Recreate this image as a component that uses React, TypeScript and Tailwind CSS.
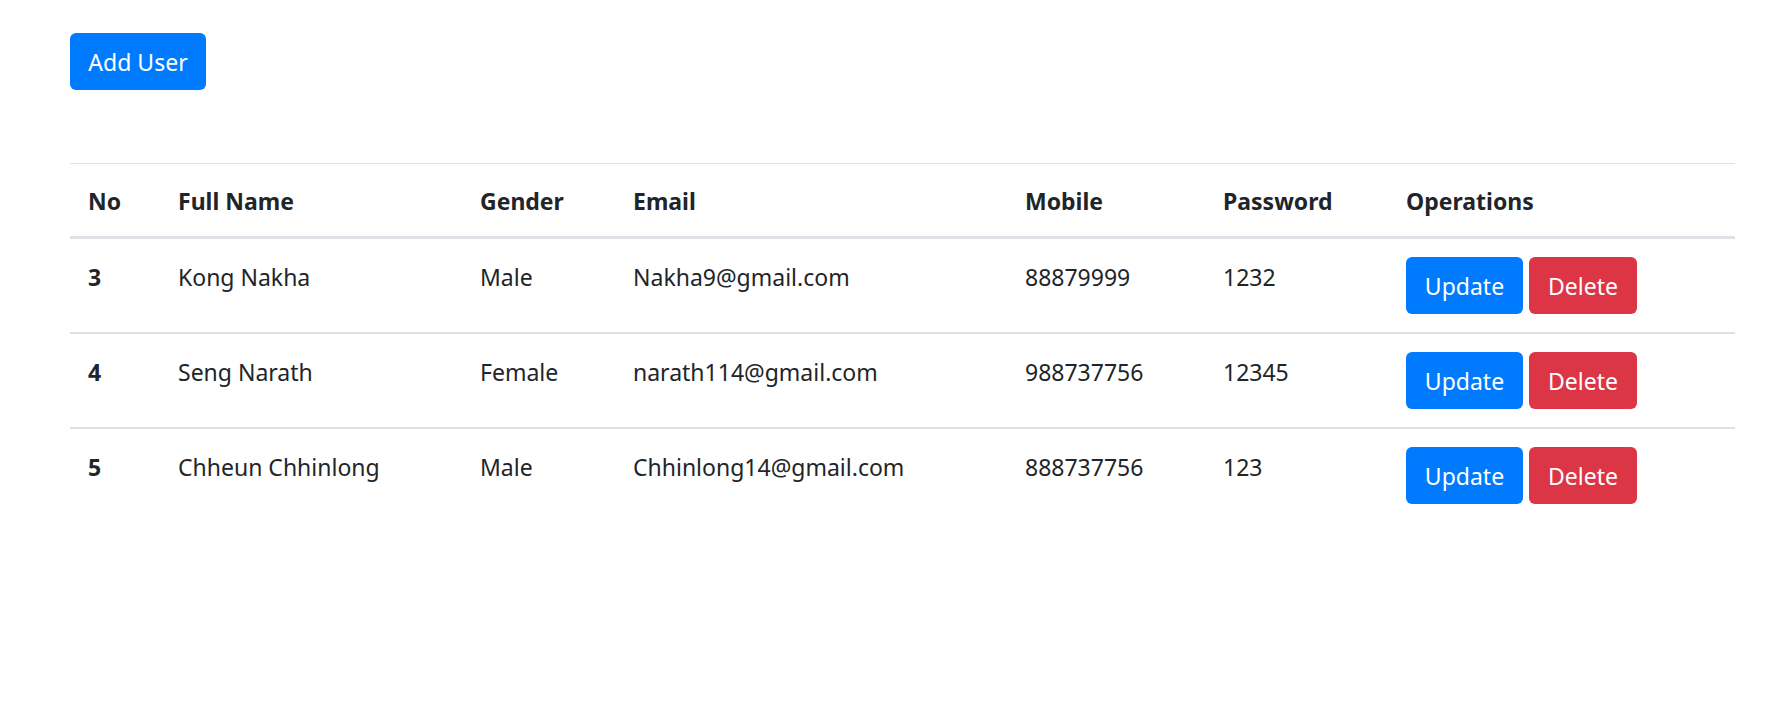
import React from 'react';

const users = [
  { no: 3, name: 'Kong Nakha', gender: 'Male', email: 'Nakha9@gmail.com', mobile: '88879999', password: '1232' },
  { no: 4, name: 'Seng Narath', gender: 'Female', email: 'narath114@gmail.com', mobile: '988737756', password: '12345' },
  { no: 5, name: 'Chheun Chhinlong', gender: 'Male', email: 'Chhinlong14@gmail.com', mobile: '888737756', password: '123' },
];

export default function App() {
  return (
    <div className="min-h-screen bg-white pl-[70px] pr-[47px] pt-[33px] font-['Noto_Sans',sans-serif] text-[23px] leading-[36px] text-[#212529]">
      <button className="h-[57px] w-[136px] rounded-[6px] bg-[#007bff] text-white">Add User</button>

      <table className="mt-[73px] w-full table-fixed border-collapse">
        <colgroup>
          <col className="w-[90px]" />
          <col className="w-[302px]" />
          <col className="w-[153px]" />
          <col className="w-[392px]" />
          <col className="w-[198px]" />
          <col className="w-[183px]" />
          <col />
        </colgroup>
        <thead>
          <tr className="border-t border-[#dee2e6] border-b-[3px]">
            {['No', 'Full Name', 'Gender', 'Email', 'Mobile', 'Password', 'Operations'].map(h => (
              <th key={h} className="px-[18px] pt-[19px] pb-[17px] text-left align-bottom font-bold">{h}</th>
            ))}
          </tr>
        </thead>
        <tbody>
          {users.map((u, i) => (
            <tr key={u.no} className={i > 0 ? 'border-t-[2px] border-[#dee2e6]' : ''}>
              <th className="px-[18px] pt-[20px] pb-[16px] text-left align-top font-bold">{u.no}</th>
              <td className="px-[18px] pt-[20px] pb-[16px] align-top">{u.name}</td>
              <td className="px-[18px] pt-[20px] pb-[16px] align-top">{u.gender}</td>
              <td className="px-[18px] pt-[20px] pb-[16px] align-top">{u.email}</td>
              <td className="px-[18px] pt-[20px] pb-[16px] align-top">{u.mobile}</td>
              <td className="px-[18px] pt-[20px] pb-[16px] align-top">{u.password}</td>
              <td className="p-[18px] align-top">
                <div className="flex gap-[6px]">
                  <button className="h-[57px] w-[117px] rounded-[6px] bg-[#007bff] text-white">Update</button>
                  <button className="h-[57px] w-[108px] rounded-[6px] bg-[#dc3545] text-white">Delete</button>
                </div>
              </td>
            </tr>
          ))}
        </tbody>
      </table>
    </div>
  );
}
